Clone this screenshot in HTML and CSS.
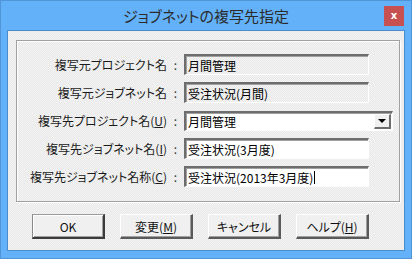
FILE: index.html
```html
<!DOCTYPE html>
<html>
<head>
	<title>ジョブネットの複写先指定</title>
	<link rel="stylesheet" href="styles.css">
</head>
<body>
	<div class="window">
		<div class="titlebar">
			<span class="title">ジョブネットの複写先指定</span>
			<button class="close">x</button>
		</div>
		<div class="client">
			<div class="group">
				<div class="label">複写元プロジェクト名</div>
				<div class="colon">:</div>
				<div class="field readonly">月間管理</div>

				<div class="label">複写元ジョブネット名</div>
				<div class="colon">:</div>
				<div class="field readonly">受注状況(月間)</div>

				<div class="label">複写先プロジェクト名(<u>U</u>)</div>
				<div class="colon">:</div>
				<div class="field combo">
					<span class="combo-text">月間管理</span>
					<span class="drop"><span class="arrow"></span></span>
				</div>

				<div class="label">複写先ジョブネット名(<u>I</u>)</div>
				<div class="colon">:</div>
				<div class="field">受注状況(3月度)</div>

				<div class="label">複写先ジョブネット名称(<u>C</u>)</div>
				<div class="colon">:</div>
				<div class="field">受注状況(2013年3月度)<span class="caret"></span></div>
			</div>
			<div class="buttons-row">
				<button class="btn default">OK</button>
				<button class="btn">変更(<u>M</u>)</button>
				<button class="btn">キャンセル</button>
				<button class="btn">ヘルプ(<u>H</u>)</button>
			</div>
		</div>
	</div>
</body>
</html>
```

FILE: styles.css
```css
body {
	margin: 0;
	font-family: "Noto Sans CJK JP", sans-serif;
	font-feature-settings: "palt";
	color: #000;
}

.window {
	width: 412px;
	height: 259px;
	box-sizing: border-box;
	border: 1px solid #4f95d8;
	background-color: #63b1f8;
	display: flex;
	flex-direction: column;
}

.titlebar {
	height: 29px;
	position: relative;
	display: flex;
	justify-content: center;
	align-items: center;
}

.title {
	font-size: 15px;
	color: #2b2b2b;
	margin-top: 0;
}

.close {
	position: absolute;
	right: 7px;
	top: 5px;
	width: 20px;
	height: 20px;
	padding: 0;
	border: none;
	background-color: #c75050;
	color: #fff;
	font-family: "DejaVu Sans", sans-serif;
	font-weight: bold;
	font-size: 10px;
	line-height: 18px;
}

.client {
	margin: 0 6px;
	height: 221px;
	box-sizing: border-box;
	border: 1px solid #4a8ccc;
	background: repeating-conic-gradient(#f4f4f4 0 25%, #e8e8e8 0 50%) 0 0 / 2px 2px;
	padding: 9px 0 0 8px;
}

.group {
	width: 384px;
	height: 162px;
	box-sizing: border-box;
	border: 1px solid #a0a0a0;
	box-shadow: inset 1px 1px #fff, 1px 1px #fff;
	display: grid;
	grid-template-columns: 150px 17px 209px;
	grid-auto-rows: 21px;
	row-gap: 7px;
	padding-top: 13px;
	align-items: center;
}

.label {
	font-size: 12px;
	text-align: right;
	color: #1a1a1a;
	white-space: nowrap;
}

.colon {
	font-size: 12px;
	text-align: center;
	color: #333;
}

.field {
	width: 185px;
	height: 21px;
	box-sizing: border-box;
	border-style: solid;
	border-width: 2px 1px 1px 2px;
	border-color: #6d6d6d #fff #fff #6d6d6d;
	box-shadow: inset 1px 1px #a0a0a0;
	background-color: #fff;
	font-size: 12px;
	line-height: 17px;
	padding-left: 2px;
	white-space: nowrap;
	display: flex;
	align-items: center;
}

.readonly {
	background: repeating-conic-gradient(#f4f4f4 0 25%, #e8e8e8 0 50%) 0 0 / 2px 2px;
}

.combo {
	width: 209px;
	height: 20px;
	justify-content: space-between;
	padding-right: 1px;
}

.drop {
	width: 17px;
	height: 15px;
	box-sizing: border-box;
	background-color: #f0f0f0;
	border-style: solid;
	border-width: 1px 2px 2px 1px;
	border-color: #fff #6d6d6d #6d6d6d #fff;
	display: flex;
	justify-content: center;
	align-items: center;
}

.arrow {
	width: 0;
	height: 0;
	border-left: 4px solid transparent;
	border-right: 4px solid transparent;
	border-top: 4px solid #000;
}

.caret {
	width: 1px;
	height: 13px;
	background-color: #000;
	margin-left: 1px;
}

.buttons-row {
	display: flex;
	gap: 15px;
	margin-top: 12px;
	padding-left: 16px;
}

.btn {
	width: 73px;
	height: 25px;
	box-sizing: border-box;
	padding: 0;
	font-family: "Noto Sans CJK JP", sans-serif;
	font-feature-settings: "palt";
	font-size: 12px;
	color: #111;
	background-color: #f0f0f0;
	border-style: solid;
	border-width: 1px 2px 2px 1px;
	border-color: #fff #5a5a5a #5a5a5a #fff;
	box-shadow: inset -1px -1px #a0a0a0;
}

.default {
	border-color: #9a9a9a #3c3c3c #3c3c3c #8a8a8a;
	box-shadow: inset 1px 1px #fff, inset -1px -1px #a0a0a0;
}
```
